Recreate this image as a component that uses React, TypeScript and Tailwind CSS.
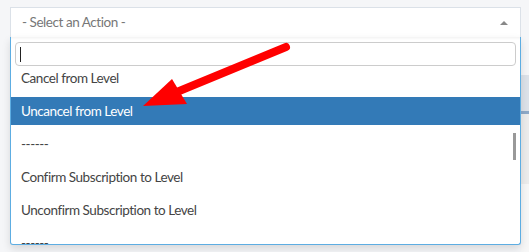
import React from 'react';

const options = [
  'Cancel from Level',
  'Uncancel from Level',
  '------',
  'Confirm Subscription to Level',
  'Unconfirm Subscription to Level',
  '------',
];

export default function App() {
  const active = 1;

  return (
    <div className="relative w-[529px] h-[252px] overflow-hidden bg-[#f5f6f8] font-['Lato',sans-serif] text-[13.5px] tracking-[-0.45px]">
      {/* page content peeking out on the right */}
      <div className="absolute right-0 top-0 w-[8px] h-full flex flex-col">
        <div className="h-[75px] bg-[#f5f6f8]" />
        <div className="h-[36px] bg-[#dde2e9]" />
        <div className="h-[3px] bg-[#8ea9c8]" />
        <div className="h-[70px] bg-[#ececec]" />
        <div className="flex-1 bg-[#f7f7f7]" />
      </div>

      <div className="relative ml-[10px] mt-[7px] w-[511px]">
        {/* select box */}
        <div className="h-[30px] flex items-center justify-between bg-white border border-b-0 border-[#dbe1e8] pl-[11px] pr-[12px]">
          <span className="text-[#777]">- Select an Action -</span>
          <span className="w-0 h-0 border-l-[4px] border-r-[4px] border-b-[4px] border-l-transparent border-r-transparent border-b-[#888]" />
        </div>

        {/* dropdown */}
        <div className="relative h-[208px] bg-white border border-t-0 border-[#5dade2] rounded-b-[3px] shadow-[0_4px_8px_rgba(0,0,0,0.12)] overflow-hidden">
          <div className="h-[3px] bg-gradient-to-b from-[#f3f3f3] to-white" />
          <div className="px-[4px] pt-[2px]">
            <div className="h-[24px] border border-[#ccc] rounded-[4px] flex items-center px-[4px]">
              <span className="w-px h-[15px] bg-[#222]" />
            </div>
          </div>
          <div className="flex flex-col gap-[5px] mt-[-2px]">
            {options.map((o, i) => (
              <div
                key={i}
                className={`h-[28px] shrink-0 flex items-center pl-[10px] ${
                  i === active ? 'bg-[#337ab7] text-white' : 'text-[#444]'
                }`}
              >
                {o}
              </div>
            ))}
          </div>
          <div className="absolute right-[4px] top-[96px] w-[3px] h-[27px] bg-[#999]" />
        </div>
      </div>

      {/* red arrow */}
      <svg className="absolute left-0 top-0" width="529" height="252" viewBox="0 0 529 252">
        <line x1="286" y1="47" x2="172" y2="94" stroke="#ff0000" strokeWidth="8" strokeLinecap="round" />
        <polygon points="143,106 172,79 187,104" fill="#ff0000" />
      </svg>
    </div>
  );
}
